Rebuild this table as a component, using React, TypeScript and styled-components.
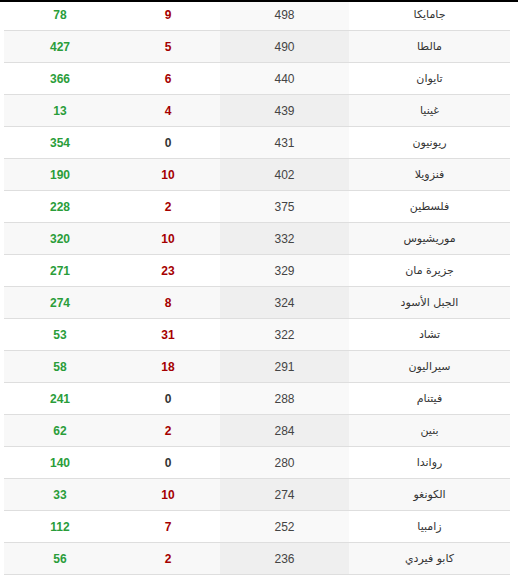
import styled, { createGlobalStyle } from 'styled-components';

type Row = {
  country: string;
  cases: number;
  deaths: number;
  recovered: number;
};

const rows: Row[] = [
  { country: 'جامايكا', cases: 498, deaths: 9, recovered: 78 },
  { country: 'مالطا', cases: 490, deaths: 5, recovered: 427 },
  { country: 'تايوان', cases: 440, deaths: 6, recovered: 366 },
  { country: 'غينيا', cases: 439, deaths: 4, recovered: 13 },
  { country: 'ريونيون', cases: 431, deaths: 0, recovered: 354 },
  { country: 'فنزويلا', cases: 402, deaths: 10, recovered: 190 },
  { country: 'فلسطين', cases: 375, deaths: 2, recovered: 228 },
  { country: 'موريشيوس', cases: 332, deaths: 10, recovered: 320 },
  { country: 'جزيرة مان', cases: 329, deaths: 23, recovered: 271 },
  { country: 'الجبل الأسود', cases: 324, deaths: 8, recovered: 274 },
  { country: 'تشاد', cases: 322, deaths: 31, recovered: 53 },
  { country: 'سيراليون', cases: 291, deaths: 18, recovered: 58 },
  { country: 'فيتنام', cases: 288, deaths: 0, recovered: 241 },
  { country: 'بنين', cases: 284, deaths: 2, recovered: 62 },
  { country: 'رواندا', cases: 280, deaths: 0, recovered: 140 },
  { country: 'الكونغو', cases: 274, deaths: 10, recovered: 33 },
  { country: 'زامبيا', cases: 252, deaths: 7, recovered: 112 },
  { country: 'كابو فيردي', cases: 236, deaths: 2, recovered: 56 },
];

const GlobalStyle = createGlobalStyle`
  body {
    margin: 0;
    background: #fff;
    font-family: "Liberation Sans", "DejaVu Sans", Arial, sans-serif;
  }
`;

export default function App() {
  return (
    <>
      <GlobalStyle />
      <Frame>
        <StatsTable dir="rtl">
          <tbody>
            {rows.map((r, i) => (
              <TableRow key={r.country} $striped={i % 2 === 1}>
                <CountryCell>{r.country}</CountryCell>
                <CasesCell $striped={i % 2 === 1}>{r.cases}</CasesCell>
                <DeathsCell $zero={r.deaths === 0}>{r.deaths}</DeathsCell>
                <RecoveredCell>{r.recovered}</RecoveredCell>
              </TableRow>
            ))}
          </tbody>
        </StatsTable>
      </Frame>
    </>
  );
}

const Frame = styled.div`
  width: 518px;
  border-top: 2px solid #000;
  overflow: hidden;
`;

const StatsTable = styled.table`
  width: 506px;
  margin: -3px 8px 0 4px;
  border-collapse: separate;
  border-spacing: 0;
  table-layout: fixed;
`;

const TableRow = styled.tr<{ $striped: boolean }>`
  background: ${(p) => (p.$striped ? '#f8f8f8' : '#fff')};
`;

const Cell = styled.td`
  height: 31px;
  padding: 0;
  border-bottom: 1px solid #dedede;
  text-align: center;
  vertical-align: middle;
  font-size: 12px;
  line-height: 14px;
`;

const CountryCell = styled(Cell)`
  width: 161px;
  color: #333;
  font-family: "DejaVu Sans", "Liberation Sans", sans-serif;
  font-size: 11px;
`;

const CasesCell = styled(Cell)<{ $striped: boolean }>`
  width: 129px;
  color: #444;
  background: ${(p) => (p.$striped ? '#efefef' : '#f9f9f9')};
`;

const DeathsCell = styled(Cell)<{ $zero: boolean }>`
  width: 104px;
  color: ${(p) => (p.$zero ? '#333' : '#a50000')};
  font-weight: 700;
`;

const RecoveredCell = styled(Cell)`
  width: 112px;
  color: #2a9d3a;
  font-weight: 700;
`;
